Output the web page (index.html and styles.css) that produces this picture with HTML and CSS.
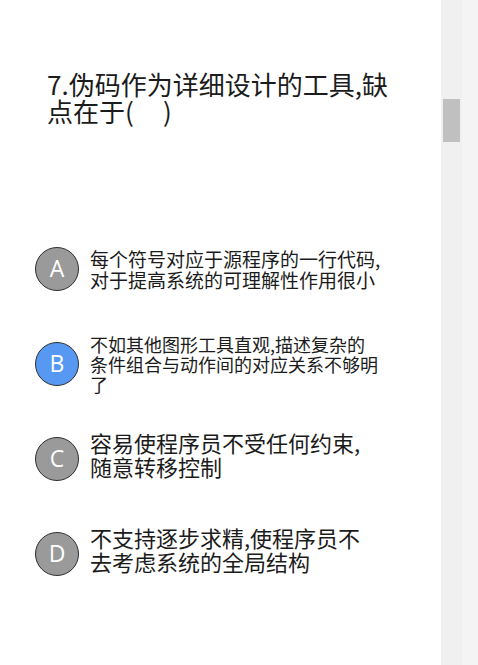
FILE: index.html
```html
<!DOCTYPE html>
<html lang="zh-CN">
<head>
<meta charset="utf-8">
<title>题目</title>
<link rel="stylesheet" href="styles.css">
</head>
<body>
<div class="page">
  <main class="content">
    <h1 class="question">7.伪码作为详细设计的工具,缺<br>点在于(&nbsp;&nbsp;&nbsp;&nbsp;&nbsp;)</h1>
    <ul class="options">
      <li class="option">
        <span class="badge">A</span>
        <p class="opt-text size-a">每个符号对应于源程序的一行代码,<br>对于提高系统的可理解性作用很小</p>
      </li>
      <li class="option">
        <span class="badge selected">B</span>
        <p class="opt-text size-b">不如其他图形工具直观,描述复杂的<br>条件组合与动作间的对应关系不够明<br>了</p>
      </li>
      <li class="option">
        <span class="badge">C</span>
        <p class="opt-text size-c">容易使程序员不受任何约束,<br>随意转移控制</p>
      </li>
      <li class="option">
        <span class="badge">D</span>
        <p class="opt-text size-c">不支持逐步求精,使程序员不<br>去考虑系统的全局结构</p>
      </li>
    </ul>
  </main>
  <div class="scrollbar"><div class="thumb"></div></div>
  <div class="gutter"></div>
</div>
</body>
</html>
```
FILE: styles.css
```css
html, body {
  margin: 0;
  padding: 0;
  background: #ffffff;
}
body {
  font-family: "Noto Sans CJK SC", "Noto Sans", sans-serif;
  color: #1b1b1b;
}
.page {
  display: flex;
  width: 478px;
  height: 665px;
  overflow: hidden;
}
.content {
  width: 441px;
  flex: none;
}
.question {
  margin: 0;
  padding: 70px 0 0 47px;
  font-size: 26px;
  line-height: 27px;
  font-weight: 400;
  height: 154px;
  box-sizing: border-box;
}
.options {
  list-style: none;
  margin: 0;
  padding: 67px 0 0 0;
}
.option {
  display: flex;
  align-items: center;
  height: 95px;
  padding-left: 35px;
}
.badge {
  flex: none;
  width: 42px;
  height: 42px;
  border-radius: 50%;
  border: 1.5px solid #2e2e2e;
  background: #9a9a9a;
  color: #ffffff;
  display: flex;
  align-items: center;
  justify-content: center;
  font-family: "Open Sans", "Noto Sans", sans-serif;
  font-size: 23px;
  line-height: 1;
}
.badge.selected {
  background: #5799f2;
}
.opt-text {
  margin: 0 0 0 11px;
  white-space: nowrap;
}
.size-a {
  font-size: 19px;
  line-height: 21px;
}
.size-b {
  font-size: 18px;
  line-height: 20px;
}
.size-c {
  font-size: 22px;
  line-height: 24px;
  padding-bottom: 10px;
}
.scrollbar {
  width: 21px;
  flex: none;
  background: #f0f0f0;
  padding-top: 99px;
  box-sizing: border-box;
}
.thumb {
  width: 17px;
  height: 43px;
  margin-left: 2px;
  background: #c0c0c0;
}
.gutter {
  flex: 1;
  background: #f4f4f4;
}
```
